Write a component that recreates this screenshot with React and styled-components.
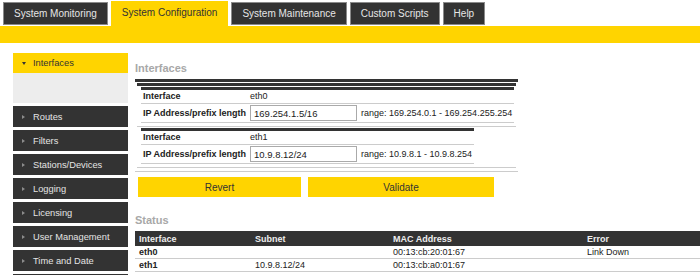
import React from 'react';
import styled, { createGlobalStyle } from 'styled-components';

const GlobalStyle = createGlobalStyle`
  body {
    margin: 0;
    background: #fff;
    font-family: "Liberation Sans", Arial, sans-serif;
    color: #222;
  }
`;

const YELLOW = '#ffd400';
const DARK = '#333';

// Styled Components
const Page = styled.div`
  width: 700px;
  height: 275px;
  overflow: hidden;
`;

const TabBar = styled.div`
  display: flex;
  align-items: flex-end;
  gap: 3px;
  height: 26px;
  padding-left: 3px;
`;

const Tab = styled.div`
  box-sizing: border-box;
  height: ${p => (p.active ? '25px' : '23px')};
  margin-bottom: ${p => (p.active ? '0' : '1px')};
  padding: 0 10px;
  border: 1px solid ${p => (p.active ? YELLOW : '#8a8a8a')};
  background: ${p => (p.active ? YELLOW : DARK)};
  color: ${p => (p.active ? '#333' : '#e6e6e6')};
  font-size: 10px;
  line-height: ${p => (p.active ? '22px' : '21px')};
  white-space: nowrap;
`;

const YellowBar = styled.div`
  height: 17px;
  background: ${YELLOW};
`;

const Main = styled.div`
  display: flex;
  padding-top: 10px;
`;

const Sidebar = styled.div`
  flex-shrink: 0;
  width: 115px;
  margin-left: 13px;
`;

const MenuItem = styled.div`
  display: flex;
  align-items: center;
  gap: 6px;
  height: ${p => (p.active ? '20px' : '21px')};
  margin-top: ${p => (p.active ? '0' : '3px')};
  padding-left: 9px;
  background: ${p => (p.active ? YELLOW : DARK)};
  color: ${p => (p.active ? '#333' : '#e4e4e4')};
  font-size: 9.3px;
  white-space: nowrap;
`;

const Caret = styled.span`
  width: 0;
  height: 0;
  border-style: solid;
  ${p =>
    p.open
      ? `border-width: 3px 2.5px 0 2.5px; border-color: #333 transparent transparent transparent; margin-right: 1px;`
      : `border-width: 2.5px 0 2.5px 3px; border-color: transparent transparent transparent #8c8c8c; margin-right: 2px;`}
`;

const SubMenu = styled.div`
  height: 30px;
  background: #ededed;
`;

const Content = styled.div`
  flex: 1;
  margin-left: 7px;
`;

const Heading = styled.h2`
  margin: ${p => (p.first ? '9px' : '17px')} 0 ${p => (p.first ? '4px' : '4px')};
  font-size: 11px;
  line-height: 13px;
  font-weight: bold;
  color: #a8a8a8;
`;

const Outer = styled.div`
  width: fit-content;
  padding: 1px 2px 3px;
  border-top: 3px solid ${DARK};
  border-bottom: 1px solid #ccc;
`;

const List = styled.div`
  border-top: 3px solid ${DARK};
`;

const Item = styled.div`
  padding: 1px 2px 3px 4px;
  border-bottom: 1px solid #ccc;
`;

const IfTable = styled.table`
  border-collapse: collapse;
  border-top: 3px solid ${DARK};
  font-size: 9px;

  td {
    padding: 1px 2px;
    border-bottom: 1px solid #ccc;
    line-height: 11px;
    white-space: nowrap;
  }
`;

const Label = styled.td`
  font-weight: bold;
  color: #222;
`;

const AddrInput = styled.input`
  box-sizing: border-box;
  display: block;
  width: 107px;
  height: 16px;
  margin: 0;
  padding: 0 3px;
  border: 1px solid #aaa;
  font-family: "Liberation Sans", Arial, sans-serif;
  font-size: 9.5px;
  color: #222;
`;

const ButtonRow = styled.div`
  display: flex;
  gap: 7px;
  margin-top: 5px;
  padding-left: 3px;
`;

const Button = styled.button`
  width: ${p => p.w}px;
  height: 20px;
  border: none;
  background: ${YELLOW};
  color: #333;
  font-family: "Liberation Sans", Arial, sans-serif;
  font-size: 10px;
  padding: 0;
`;

const StatusTable = styled.table`
  width: 100%;
  border-collapse: collapse;
  font-size: 9px;
  table-layout: fixed;

  th {
    height: 15px;
    padding: 0 4px;
    background: ${DARK};
    color: #eee;
    text-align: left;
    font-weight: bold;
  }

  td {
    height: 12px;
    padding: 0 4px;
    border-bottom: 1px solid #ccc;
    line-height: 12px;
    white-space: nowrap;
  }
`;

const NameCell = styled.td`
  font-weight: bold;
`;
// End of Styled Components

const tabs = ['System Monitoring', 'System Configuration', 'System Maintenance', 'Custom Scripts', 'Help'];
const menu = ['Routes', 'Filters', 'Stations/Devices', 'Logging', 'Licensing', 'User Management', 'Time and Date'];

const interfaces = [
  { name: 'eth0', addr: '169.254.1.5/16', range: 'range: 169.254.0.1 - 169.254.255.254' },
  { name: 'eth1', addr: '10.9.8.12/24', range: 'range: 10.9.8.1 - 10.9.8.254' },
];

const status = [
  { name: 'eth0', subnet: '', mac: '00:13:cb:20:01:67', error: 'Link Down' },
  { name: 'eth1', subnet: '10.9.8.12/24', mac: '00:13:cb:a0:01:67', error: '' },
];

export default function App() {
  return (
    <Page>
      <GlobalStyle />
      <TabBar>
        {tabs.map(t => (
          <Tab key={t} active={t === 'System Configuration'}>{t}</Tab>
        ))}
      </TabBar>
      <YellowBar />
      <Main>
        <Sidebar>
          <MenuItem active>
            <Caret open />
            Interfaces
          </MenuItem>
          <SubMenu />
          {menu.map(m => (
            <MenuItem key={m}>
              <Caret />
              {m}
            </MenuItem>
          ))}
          {/* next entry is below the fold, only its top edge shows */}
          <MenuItem />
        </Sidebar>
        <Content>
          <Heading first>Interfaces</Heading>
          <Outer>
            <List>
              {interfaces.map(i => (
                <Item key={i.name}>
                  <IfTable>
                    <tbody>
                      <tr>
                        <Label>Interface</Label>
                        <td colSpan={2}>{i.name}</td>
                      </tr>
                      <tr>
                        <Label>IP Address/prefix length</Label>
                        <td><AddrInput defaultValue={i.addr} /></td>
                        <td>{i.range}</td>
                      </tr>
                    </tbody>
                  </IfTable>
                </Item>
              ))}
            </List>
          </Outer>
          <ButtonRow>
            <Button w={163}>Revert</Button>
            <Button w={186}>Validate</Button>
          </ButtonRow>
          <Heading>Status</Heading>
          <StatusTable>
            <colgroup>
              <col style={{ width: 116 }} />
              <col style={{ width: 138 }} />
              <col style={{ width: 194 }} />
              <col />
            </colgroup>
            <thead>
              <tr>
                <th>Interface</th>
                <th>Subnet</th>
                <th>MAC Address</th>
                <th>Error</th>
              </tr>
            </thead>
            <tbody>
              {status.map(s => (
                <tr key={s.name}>
                  <NameCell>{s.name}</NameCell>
                  <td>{s.subnet}</td>
                  <td>{s.mac}</td>
                  <td>{s.error}</td>
                </tr>
              ))}
            </tbody>
          </StatusTable>
        </Content>
      </Main>
    </Page>
  );
}
